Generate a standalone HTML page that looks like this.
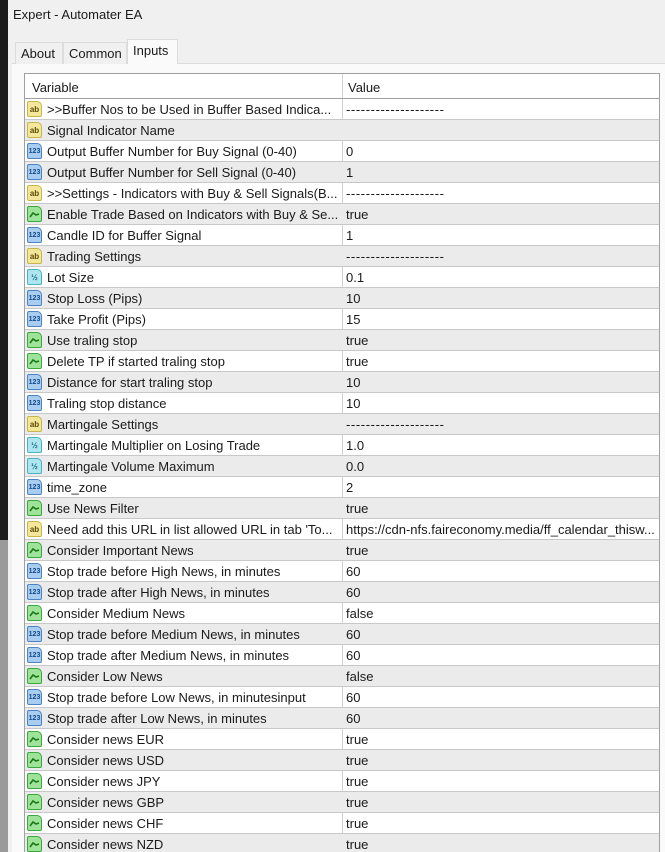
<!DOCTYPE html><html><head><meta charset="utf-8"><style>
*{box-sizing:border-box;margin:0;padding:0}
body{width:665px;height:852px;overflow:hidden;background:#f0f0f0;font-family:"Liberation Sans",sans-serif;font-size:13px;color:#1a1a1a;position:relative}
.strip{position:absolute;left:0;top:0;width:8px;height:852px;background:#1b1b1b}
.strip2{position:absolute;left:0;top:540px;width:8px;height:312px;background:#9a9a9a}
.title{position:absolute;left:13px;top:7px;font-size:13px}
.tab{position:absolute;top:42px;height:22px;padding:3px 5px;border:1px solid #dcdcdc;border-bottom:none;background:#f0f0f0}
.tab.sel{top:39px;height:25px;background:#fafafa}
.panel{position:absolute;left:12px;top:63px;width:653px;height:789px;background:#fafafa;border-top:1px solid #dcdcdc}
.tbl{position:absolute;left:24px;top:73px;width:636px;height:779px;background:#fff;border:1px solid #a0a0a0;border-bottom:none;overflow:hidden}
.hdr{height:25px;border-bottom:1px solid #a0a0a0;position:relative}
.hdr span{position:absolute;top:6px}
.r{height:21px;border-bottom:1px solid #c8c8c8;position:relative;white-space:nowrap}
.r:nth-child(even){background:#ebebeb}
.r .n{position:absolute;left:22px;top:3px}
.r .v{position:absolute;left:321px;top:3px}
.d{letter-spacing:0.6px}
.cd{position:absolute;left:317px;top:0;width:1px;height:779px;background:#d0d0d0}
.i{position:absolute;left:2px;top:2px;width:15px;height:16px;border-radius:2px 5px 2px 2px;font-size:8px;font-weight:bold;text-align:center;line-height:16px;font-style:normal}
.ab{background:#f3e79a;border:1px solid #c9b64a;color:#5a4a00}
.n1{background:#a9cdf0;border:1px solid #4a84c4;color:#124a8a;font-size:7px}
.h{background:#aee6ef;border:1px solid #4ab0c4;color:#1a6a8a;font-size:8px}
.g{background:#9ee39a;border:1px solid #3aa83a}
.g svg{position:absolute;left:1px;top:2px}
</style></head><body>
<div class="strip"></div><div class="strip2"></div>
<div class="title">Expert - Automater EA</div>
<div class="panel"></div>
<div class="tab" style="left:15px;width:48px">About</div>
<div class="tab" style="left:63px;width:64px">Common</div>
<div class="tab sel" style="left:127px;width:51px">Inputs</div>
<div class="tbl"><div class="cd"></div>
<div class="hdr"><span style="left:7px">Variable</span><span style="left:323px">Value</span></div>
<div>
<div class="r"><i class="i ab">ab</i><span class="n">&gt;&gt;Buffer Nos to be Used in Buffer Based Indica...</span><span class="v d">--------------------</span></div>
<div class="r"><i class="i ab">ab</i><span class="n">Signal Indicator Name</span><span class="v"></span></div>
<div class="r"><i class="i n1">123</i><span class="n">Output Buffer Number for Buy Signal (0-40)</span><span class="v">0</span></div>
<div class="r"><i class="i n1">123</i><span class="n">Output Buffer Number for Sell Signal (0-40)</span><span class="v">1</span></div>
<div class="r"><i class="i ab">ab</i><span class="n">&gt;&gt;Settings - Indicators with Buy &amp; Sell Signals(B...</span><span class="v d">--------------------</span></div>
<div class="r"><i class="i g"><svg width="11" height="10"><path d="M1 8 L4 4 L7 6 L10 5" stroke="#1a7a1a" stroke-width="1.6" fill="none"/></svg></i><span class="n">Enable Trade Based on Indicators with Buy &amp; Se...</span><span class="v">true</span></div>
<div class="r"><i class="i n1">123</i><span class="n">Candle ID for Buffer Signal</span><span class="v">1</span></div>
<div class="r"><i class="i ab">ab</i><span class="n">Trading Settings</span><span class="v d">--------------------</span></div>
<div class="r"><i class="i h">½</i><span class="n">Lot Size</span><span class="v">0.1</span></div>
<div class="r"><i class="i n1">123</i><span class="n">Stop Loss (Pips)</span><span class="v">10</span></div>
<div class="r"><i class="i n1">123</i><span class="n">Take Profit (Pips)</span><span class="v">15</span></div>
<div class="r"><i class="i g"><svg width="11" height="10"><path d="M1 8 L4 4 L7 6 L10 5" stroke="#1a7a1a" stroke-width="1.6" fill="none"/></svg></i><span class="n">Use traling stop</span><span class="v">true</span></div>
<div class="r"><i class="i g"><svg width="11" height="10"><path d="M1 8 L4 4 L7 6 L10 5" stroke="#1a7a1a" stroke-width="1.6" fill="none"/></svg></i><span class="n">Delete TP if started traling stop</span><span class="v">true</span></div>
<div class="r"><i class="i n1">123</i><span class="n">Distance for start traling stop</span><span class="v">10</span></div>
<div class="r"><i class="i n1">123</i><span class="n">Traling stop distance</span><span class="v">10</span></div>
<div class="r"><i class="i ab">ab</i><span class="n">Martingale Settings</span><span class="v d">--------------------</span></div>
<div class="r"><i class="i h">½</i><span class="n">Martingale Multiplier on Losing Trade</span><span class="v">1.0</span></div>
<div class="r"><i class="i h">½</i><span class="n">Martingale Volume Maximum</span><span class="v">0.0</span></div>
<div class="r"><i class="i n1">123</i><span class="n">time_zone</span><span class="v">2</span></div>
<div class="r"><i class="i g"><svg width="11" height="10"><path d="M1 8 L4 4 L7 6 L10 5" stroke="#1a7a1a" stroke-width="1.6" fill="none"/></svg></i><span class="n">Use News Filter</span><span class="v">true</span></div>
<div class="r"><i class="i ab">ab</i><span class="n">Need add this URL in list allowed URL in tab 'To...</span><span class="v">https://cdn-nfs.faireconomy.media/ff_calendar_thisw...</span></div>
<div class="r"><i class="i g"><svg width="11" height="10"><path d="M1 8 L4 4 L7 6 L10 5" stroke="#1a7a1a" stroke-width="1.6" fill="none"/></svg></i><span class="n">Consider Important News</span><span class="v">true</span></div>
<div class="r"><i class="i n1">123</i><span class="n">Stop trade before High News, in minutes</span><span class="v">60</span></div>
<div class="r"><i class="i n1">123</i><span class="n">Stop trade after High News, in minutes</span><span class="v">60</span></div>
<div class="r"><i class="i g"><svg width="11" height="10"><path d="M1 8 L4 4 L7 6 L10 5" stroke="#1a7a1a" stroke-width="1.6" fill="none"/></svg></i><span class="n">Consider Medium News</span><span class="v">false</span></div>
<div class="r"><i class="i n1">123</i><span class="n">Stop trade before Medium News, in minutes</span><span class="v">60</span></div>
<div class="r"><i class="i n1">123</i><span class="n">Stop trade after Medium News, in minutes</span><span class="v">60</span></div>
<div class="r"><i class="i g"><svg width="11" height="10"><path d="M1 8 L4 4 L7 6 L10 5" stroke="#1a7a1a" stroke-width="1.6" fill="none"/></svg></i><span class="n">Consider Low News</span><span class="v">false</span></div>
<div class="r"><i class="i n1">123</i><span class="n">Stop trade before Low News, in minutesinput</span><span class="v">60</span></div>
<div class="r"><i class="i n1">123</i><span class="n">Stop trade after Low News, in minutes</span><span class="v">60</span></div>
<div class="r"><i class="i g"><svg width="11" height="10"><path d="M1 8 L4 4 L7 6 L10 5" stroke="#1a7a1a" stroke-width="1.6" fill="none"/></svg></i><span class="n">Consider news EUR</span><span class="v">true</span></div>
<div class="r"><i class="i g"><svg width="11" height="10"><path d="M1 8 L4 4 L7 6 L10 5" stroke="#1a7a1a" stroke-width="1.6" fill="none"/></svg></i><span class="n">Consider news USD</span><span class="v">true</span></div>
<div class="r"><i class="i g"><svg width="11" height="10"><path d="M1 8 L4 4 L7 6 L10 5" stroke="#1a7a1a" stroke-width="1.6" fill="none"/></svg></i><span class="n">Consider news JPY</span><span class="v">true</span></div>
<div class="r"><i class="i g"><svg width="11" height="10"><path d="M1 8 L4 4 L7 6 L10 5" stroke="#1a7a1a" stroke-width="1.6" fill="none"/></svg></i><span class="n">Consider news GBP</span><span class="v">true</span></div>
<div class="r"><i class="i g"><svg width="11" height="10"><path d="M1 8 L4 4 L7 6 L10 5" stroke="#1a7a1a" stroke-width="1.6" fill="none"/></svg></i><span class="n">Consider news CHF</span><span class="v">true</span></div>
<div class="r"><i class="i g"><svg width="11" height="10"><path d="M1 8 L4 4 L7 6 L10 5" stroke="#1a7a1a" stroke-width="1.6" fill="none"/></svg></i><span class="n">Consider news NZD</span><span class="v">true</span></div>
</div></div>
</body></html>
